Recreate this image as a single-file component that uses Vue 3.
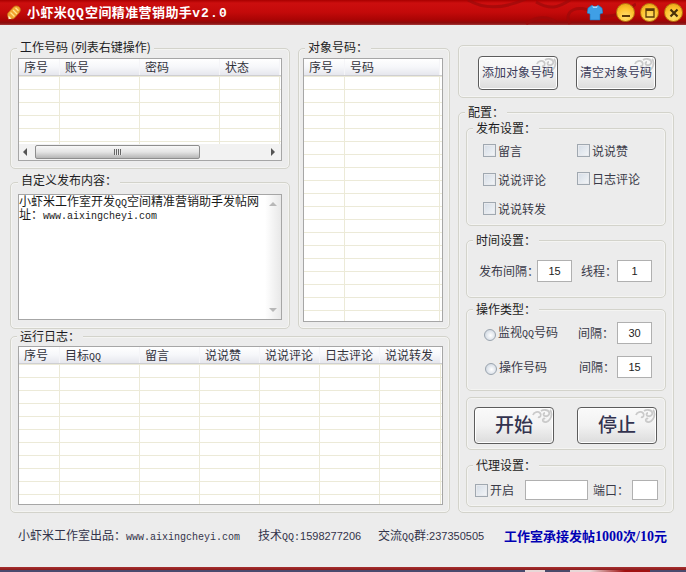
<script setup>
import { h } from 'vue'

const Swirl = () =>
  h('svg', { class: 'swirl', width: 21, height: 15, viewBox: '0 0 21 15', fill: 'none', stroke: '#cacaca', 'stroke-width': 1.8 }, [
    h('path', { d: 'M1 6c1-3 5-4 7-2s0 5-2 4' }),
    h('path', { d: 'M9 2c3-2 7-1 8 1s-1 5-4 4c-2 0-2-3 0-3' }),
    h('path', { d: 'M18 1c2 2 2 6 0 9s-5 4-7 2c-1-2 1-3 2-2' })
  ])

const rows = (n) => Array.from({ length: n }, (_, i) => i)
const workCols = [
  { t: '序号', w: 41 }, { t: '账号', w: 80 }, { t: '密码', w: 80 }, { t: '状态', w: 60 }
]
const targetCols = [{ t: '序号', w: 41 }, { t: '号码', w: 95 }]
const logCols = [
  { t: '序号', w: 41 }, { t: '目标', q: 'QQ', w: 80 }, { t: '留言', w: 60 }, { t: '说说赞', w: 60 },
  { t: '说说评论', w: 60 }, { t: '日志评论', w: 60 }, { t: '说说转发', w: 61 }
]
const tables = { work: workCols, target: targetCols, log: logCols }
</script>

<template>
  <div class="window">
    <header class="titlebar">
      <svg class="app-icon" width="14" height="15" viewBox="0 0 14 15">
        <path d="M1 8 7 1.500c2-1.200 5-.5 6 1.500 .8 2 .2 3.500-1 5l-5 5.500c-2 .8-4 .5-5.500-.5C.5 11.500 .3 9.500 1 8z" fill="#f2a32e" stroke="#c4761a" stroke-width=".7" />
        <path d="M3.500 7.500l4 4M6 5l4 4M8.500 2.800l3 3" stroke="#ffe48c" stroke-width="1.300" />
        <path d="M1.500 10.500l3 3.200-3 .6z" fill="#fff3c8" />
      </svg>
      <span class="title">小虾米<span class="tm">QQ</span>空间精准营销助手<span class="tm">v2.0</span></span>
      <svg class="flourish" width="170" height="25" viewBox="0 0 170 25" fill="none" stroke="#9c0a0a" stroke-width="3">
        <path d="M2 0c20 12 42 6 58-1M70 2c14 8 22 6 34-2" />
        <path d="M104 24c-8-14 10-20 22-12s28 4 44-8" />
        <path d="M60 24c10-8 22-8 30-2" />
      </svg>
      <svg class="shirt" width="16" height="17" viewBox="0 0 16 17">
        <path d="M5 1 1 4 0 9l3 1v6h10v-6l3-1-1-5-4-3c-1 2-5 2-6 0z" fill="#3f9fe6" stroke="#1a6fb8" stroke-width=".6" />
        <path d="M5 1c1 2 5 2 6 0l-1 3H6z" fill="#a5dcff" />
      </svg>
      <div class="winbtns">
        <span class="winbtn"><svg width="10" height="10" viewBox="0 0 10 10"><path d="M1 7h8v2H1z" fill="#5a3a08" /></svg></span>
        <span class="winbtn"><svg width="10" height="10" viewBox="0 0 10 10"><path d="M1 1h8v8H1z" fill="none" stroke="#5a3a08" stroke-width="1.300" /><path d="M1 1h8v2H1z" fill="#5a3a08" /></svg></span>
        <span class="winbtn"><svg width="10" height="10" viewBox="0 0 10 10"><path d="M1.500 1.500l7 7M8.500 1.500l-7 7" stroke="#4a3008" stroke-width="2.200" /></svg></span>
      </div>
    </header>

    <main class="body">
      <div class="columns">
        <div class="left">
          <div class="left-top">
            <div class="left-stack">
              <section class="group work">
                <div class="legend">工作号码 (列表右键操作)</div>
                <div class="table work-table">
                  <div class="thead">
                    <div v-for="c in tables.work" :key="c.t" class="th" :style="{ width: c.w + 'px' }">{{ c.t }}</div>
                  </div>
                  <div class="tbody">
                    <div v-for="r in rows(6)" :key="r" class="tr">
                      <div v-for="c in tables.work" :key="c.t" class="td" :style="{ width: c.w + 'px' }"></div>
                    </div>
                  </div>
                  <div class="hscroll">
                    <span class="arrow left-a"></span>
                    <div class="thumb"><span class="grip"></span></div>
                    <span class="arrow right-a"></span>
                  </div>
                </div>
              </section>

              <section class="group custom">
                <div class="legend">自定义发布内容：</div>
                <div class="textarea">
                  <div class="text">小虾米工作室开发<span class="m">QQ</span>空间精准营销助手发帖网<br />址：<span class="m">www.aixingcheyi.com</span></div>
                  <div class="vscroll">
                    <span class="up"></span>
                    <span class="down"></span>
                  </div>
                </div>
              </section>
            </div>

            <section class="group target">
              <div class="legend">对象号码：</div>
              <div class="table target-table">
                <div class="thead">
                  <div v-for="c in tables.target" :key="c.t" class="th" :style="{ width: c.w + 'px' }">{{ c.t }}</div>
                </div>
                <div class="tbody">
                  <div v-for="r in rows(20)" :key="r" class="tr">
                    <div v-for="c in tables.target" :key="c.t" class="td" :style="{ width: c.w + 'px' }"></div>
                  </div>
                </div>
              </div>
            </section>
          </div>

          <section class="group log">
            <div class="legend">运行日志：</div>
            <div class="table log-table">
              <div class="thead">
                <div v-for="c in tables.log" :key="c.t" class="th" :style="{ width: c.w + 'px' }">{{ c.t }}<span v-if="c.q" class="m">{{ c.q }}</span></div>
              </div>
              <div class="tbody">
                <div v-for="r in rows(11)" :key="r" class="tr">
                  <div v-for="c in tables.log" :key="c.t" class="td" :style="{ width: c.w + 'px' }"></div>
                </div>
              </div>
            </div>
          </section>
        </div>

        <div class="right">
          <section class="group actions">
            <button class="btn"><Swirl /><span class="btn-t">添加对象号码</span></button>
            <button class="btn"><Swirl /><span class="btn-t">清空对象号码</span></button>
          </section>

          <section class="group config">
            <div class="legend">配置：</div>

            <section class="group publish">
              <div class="legend">发布设置：</div>
              <div class="checks">
                <label class="check"><span class="box"></span>留言</label>
                <label class="check"><span class="box"></span>说说赞</label>
                <label class="check"><span class="box"></span>说说评论</label>
                <label class="check up1"><span class="box"></span>日志评论</label>
                <label class="check"><span class="box"></span>说说转发</label>
              </div>
            </section>

            <section class="group time">
              <div class="legend">时间设置：</div>
              <div class="time-row">
                <span>发布间隔：</span>
                <span class="input">15</span>
                <span class="thread">线程：</span>
                <span class="input">1</span>
              </div>
            </section>

            <section class="group op">
              <div class="legend">操作类型：</div>
              <div class="op-row">
                <span class="radio"></span>
                <span class="op-name">监视<span class="m">QQ</span>号码</span>
                <span>间隔：</span>
                <span class="input">30</span>
              </div>
              <div class="op-row second">
                <span class="radio"></span>
                <span class="op-name">操作号码</span>
                <span>间隔：</span>
                <span class="input">15</span>
              </div>
            </section>

            <section class="group start">
              <button class="btn big"><Swirl /><span class="btn-t">开始</span></button>
              <button class="btn big"><Swirl /><span class="btn-t">停止</span></button>
            </section>

            <section class="group proxy">
              <div class="legend">代理设置：</div>
              <div class="proxy-row">
                <span class="box"></span>
                <span class="open">开启</span>
                <span class="input host"></span>
                <span class="port">端口：</span>
                <span class="input portin"></span>
              </div>
            </section>
          </section>
        </div>
      </div>

      <footer class="footer">
        <span class="f1">小虾米工作室出品：<span class="m">www.aixingcheyi.com</span></span>
        <span class="f2">技术<span class="m">QQ:</span><span class="n">1598277206</span></span>
        <span class="f3">交流<span class="m">QQ</span>群<span class="n">:237350505</span></span>
        <span class="f4">工作室承接发帖<span class="s">1000</span>次<span class="s">/10</span>元</span>
      </footer>
    </main>
    <div class="strip"></div>
  </div>
</template>

<style scoped>
* { box-sizing: border-box; }
.window {
  width: 686px;
  height: 572px;
  display: flex;
  flex-direction: column;
  overflow: hidden;
  font: 12px/14px 'Noto Sans CJK SC', sans-serif;
  color: #2a2a30;
  background: #ececec;
}
.m { font: 10px/14px 'Liberation Mono', monospace; }
.n { font: 11px/14px 'Liberation Sans', sans-serif; }

/* title bar */
.titlebar {
  height: 25px;
  flex: none;
  position: relative;
  display: flex;
  align-items: center;
  padding-left: 7px;
  background: linear-gradient(#a80000 0, #cc0e0e 3px, #c40a0a 12px, #a80404 20px, #8a0d0d 23px, #a83a3a 25px);
}
.app-icon { flex: none; }
.title {
  margin: 1px 0 0 6px;
  font-size: 13px;
  font-weight: 700;
  color: #fff;
  letter-spacing: .4px;
  white-space: nowrap;
}
.tm { font: 700 13px/14px 'Liberation Mono', monospace; letter-spacing: 1.100px; }
.flourish { position: absolute; right: 50px; top: 0; opacity: .7; }
.shirt { margin-left: auto; margin-right: 13px; position: relative; }
.winbtns { display: flex; gap: 5px; margin-right: 3px; position: relative; }
.winbtn {
  width: 19px;
  height: 19px;
  border-radius: 50%;
  display: flex;
  align-items: center;
  justify-content: center;
  background: radial-gradient(circle at 50% 75%, #ffe070 0, #fdc22c 55%, #e09a10 100%);
  border: 1px solid #b87c10;
}

/* body */
.body {
  flex: 1;
  display: flex;
  flex-direction: column;
  margin: 0 1px 0 2px;
  padding: 20px 0 0 8px;
  min-height: 0;
  background: #ececec;
}
.columns { display: flex; gap: 8px; }
.left { width: 440px; padding-top: 3px; flex: none; }
.left-top { display: flex; gap: 8px; }
.left-stack { width: 280px; }
.right { width: 216px; flex: none; }

.group {
  display: flex;
  flex-direction: column;
  align-items: flex-start;
  border: 1px solid #d3d3cb;
  border-radius: 5px;
  padding: 0 7px;
  box-shadow: inset 0 0 0 1px #f4f4f2;
}
.legend {
  margin: -8px 0 0 -1px;
  padding: 0 3px;
  height: 14px;
  background: #ececec;
  color: #1c1c22;
  white-space: nowrap;
}

.work { height: 121px; }
.work .legend { margin: -9px 0 4px -1px; }
.custom { height: 147px; margin-top: 13px; }
.custom .legend { margin: -10px 0 7px 0; }
.target { height: 281px; width: 152px; }
.target .legend { margin: -9px 0 4px -1px; }
.log { height: 177px; margin-top: 7px; }
.log .legend { margin: -8px 0 3px -1px; }

/* tables */
.table {
  border: 1px solid #a6a6a6;
  background: #fff;
  display: flex;
  flex-direction: column;
  overflow: hidden;
}
.work-table { width: 264px; height: 103px; }
.target-table { width: 140px; height: 264px; margin-left: -3px; }
.log-table { width: 425px; height: 159px; }
.thead {
  display: flex;
  height: 17px;
  flex: none;
  border-bottom: 1px solid #cfcfd2;
  background: #fff;
}
.th {
  flex: none;
  height: 16px;
  padding: 1px 0 0 5px;
  line-height: 14px;
  color: #33333c;
  background: linear-gradient(#fff, #f6f7fa 50%, #e6e7ee);
  border-right: 1px solid #f5f5f8;
  white-space: nowrap;
}
.tbody { flex: 1; min-height: 0; overflow: hidden; }
.tr { display: flex; height: 13px; border-top: 1px solid #ecead8; }
.td { flex: none; height: 12px; border-right: 1px solid #ecead8; }

/* scrollbars */
.hscroll {
  height: 16px;
  flex: none;
  display: flex;
  align-items: center;
  background: #f2f2f2;
  position: relative;
  padding-left: 16px;
}
.thumb {
  width: 165px;
  height: 14px;
  border: 1px solid #8e8e8e;
  border-radius: 2px;
  background: linear-gradient(#f8f8f8, #e4e4e4 50%, #b6b6b6);
  display: flex;
  align-items: center;
  justify-content: center;
}
.grip {
  width: 8px;
  height: 6px;
  background: repeating-linear-gradient(90deg, #666 0 1px, #e8e8e8 1px 2px);
}
.arrow { position: absolute; top: 4px; width: 0; height: 0; border: 4px solid transparent; }
.left-a { left: 4px; border-right-color: #555; border-left-width: 0; }
.right-a { right: 6px; border-left-color: #555; border-right-width: 0; }

.textarea {
  width: 264px;
  height: 126px;
  border: 1px solid #a6a6a6;
  background: #fff;
  display: flex;
}
.text {
  flex: 1;
  line-height: 13px;
  margin-top: -1px;
  color: #1a1a1a;
  white-space: nowrap;
}
.text .m { line-height: 0; }
.vscroll {
  width: 16px;
  flex: none;
  background: linear-gradient(90deg, #fff, #e8e8e8);
  display: flex;
  flex-direction: column;
  justify-content: space-between;
  align-items: center;
  padding: 7px 0;
}
.up, .down { width: 0; height: 0; border: 4px solid transparent; }
.up { border-bottom-color: #b8b8b8; border-top-width: 0; }
.down { border-top-color: #b8b8b8; border-bottom-width: 0; }

/* buttons */
.btn {
  position: relative;
  width: 80px;
  height: 34px;
  padding: 0;
  border: 1px solid #5c5c5c;
  border-radius: 4px;
  background: linear-gradient(#fafafa, #f2f2f2 50%, #dcdcdc);
  box-shadow: inset 0 0 0 1px #fff;
  font: 12px/14px 'Noto Sans CJK SC', sans-serif;
  color: #3a3a58;
  white-space: nowrap;
}
.btn-t { position: relative; display: block; margin-top: -2px; }
.swirl { position: absolute; top: 1px; right: 0; }
.actions {
  height: 53px;
  flex-direction: row;
  gap: 18px;
  padding: 10px 0 0 19px;
}
.big {
  height: 37px;
  font-size: 19px;
  line-height: 24px;
  color: #33334f;
  font-weight: 500;
}
.big .btn-t { margin-top: -3px; }

/* config */
.config { margin-top: 14px; height: 401px; }
.config > .legend { margin-bottom: 9px; }
.config .group { width: 200px; }
.publish { height: 98px; }
.checks {
  display: grid;
  grid-template-columns: 94px 80px;
  grid-auto-rows: 13px;
  row-gap: 16px;
  margin: 9px 0 0 9px;
}
.check {
  display: flex;
  align-items: center;
  gap: 2px;
  white-space: nowrap;
  color: #3a3a48;
}
.up1 { margin-top: -2px; }
.box {
  display: block;
  flex: none;
  width: 13px;
  height: 13px;
  border: 1px solid #a0a8b0;
  background: linear-gradient(135deg, #d4dce6, #f4f6f8);
  box-shadow: inset 0 0 0 1px #e8eaee;
}

.time { height: 58px; margin-top: 14px; }
.time-row {
  display: flex;
  align-items: center;
  margin: 13px 0 0 5px;
  color: #3a3a48;
}
.input {
  display: flex;
  align-items: center;
  justify-content: center;
  width: 35px;
  height: 22px;
  flex: none;
  border: 1px solid #b0b0b0;
  background: #fff;
  font: 11px/14px 'Liberation Sans', sans-serif;
  color: #222;
}
.time-row span:first-child { width: 58px; white-space: nowrap; }
.thread { width: 36px; margin-left: 9px; white-space: nowrap; }

.op { height: 82px; margin-top: 11px; }
.op-row {
  display: flex;
  align-items: center;
  margin: 6px 0 0 10px;
  color: #3a3a48;
  white-space: nowrap;
}
.op-row.second { margin: 12px 0 0 11px; }
.radio {
  width: 12px;
  height: 12px;
  flex: none;
  margin-top: 3px;
  border-radius: 50%;
  border: 1px solid #9aa4ae;
  background: radial-gradient(circle at 55% 55%, #fff 0, #d0d8e2 80%);
}
.op-name { margin-left: 2px; width: 80px; }
.op-row span:nth-child(3) { width: 39px; }
.op-row.second span:nth-child(3) { width: 38px; }

.start {
  height: 53px;
  margin-top: 6px;
  flex-direction: row;
  gap: 23px;
  padding: 9px 0 0 7px;
}
.proxy { height: 42px; margin-top: 15px; }
.proxy-row {
  display: flex;
  align-items: center;
  margin: 8px 0 0 1px;
  color: #3a3a48;
  white-space: nowrap;
}
.proxy-row .box { width: 13px; margin-right: 2px; }
.open { width: 35px; }
.host { width: 63px; height: 20px; }
.port { width: 39px; margin-left: 5px; }
.portin { width: 26px; height: 20px; }

/* footer */
.footer {
  margin-top: 15px;
  padding-left: 8px;
  display: flex;
  align-items: center;
  color: #33334a;
  white-space: nowrap;
}
.f1 { width: 240px; }
.f2 { width: 120px; }
.f3 { width: 126px; }
.f4 { font-size: 13px; font-weight: 700; color: #0000b4; }
.s { font: 700 14px/14px 'Liberation Serif', serif; }

.strip {
  height: 5px;
  flex: none;
  background:
    linear-gradient(90deg, transparent 0 525px, #e8d8d8 525px 545px, #4a4a6a 545px 570px, #e8d8d8 570px 590px, #a01010 625px 650px, transparent 650px) 0 3px / 100% 2px no-repeat,
    linear-gradient(#a83030 0, #8a1c1c 3px, #4a4a6e 3px);
}
</style>
